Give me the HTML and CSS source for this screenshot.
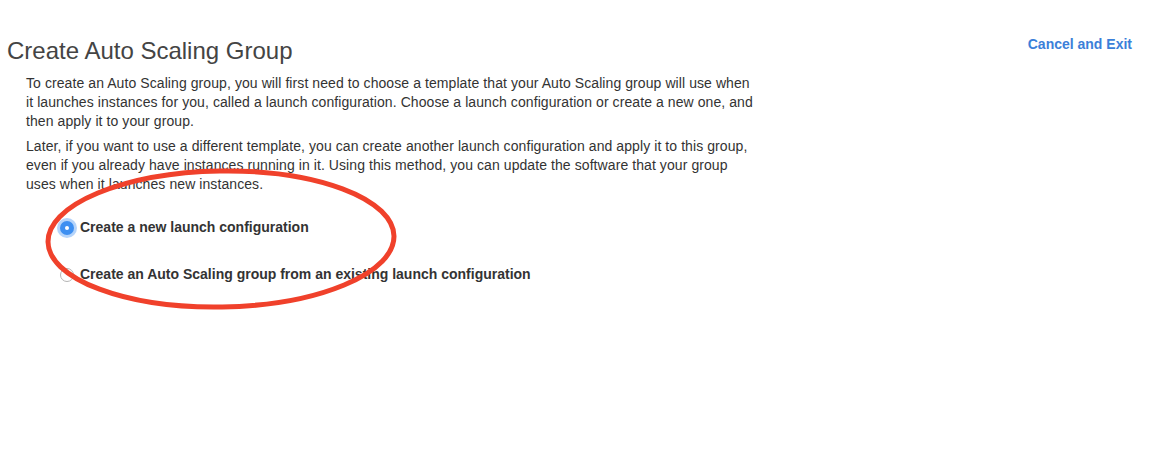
FILE: index.html
```html
<!DOCTYPE html>
<html>
<head>
<meta charset="utf-8">
<link rel="stylesheet" href="styles.css">
</head>
<body>
<div class="page">
  <div class="header">
    <h1 class="title">Create Auto Scaling Group</h1>
    <a class="cancel" href="#">Cancel and Exit</a>
  </div>
  <div class="content">
    <p class="para">To create an Auto Scaling group, you will first need to choose a template that your Auto Scaling group will use when it launches instances for you, called a launch configuration. Choose a launch configuration or create a new one, and then apply it to your group.</p>
    <p class="para">Later, if you want to use a different template, you can create another launch configuration and apply it to this group, even if you already have instances running in it. Using this method, you can update the software that your group uses when it launches new instances.</p>
    <div class="options">
      <label class="option"><span class="radio checked"></span><span class="label">Create a new launch configuration</span></label>
      <label class="option"><span class="radio"></span><span class="label">Create an Auto Scaling group from an existing launch configuration</span></label>
    </div>
  </div>
  <svg class="annotation" width="420" height="170" viewBox="0 0 420 170">
    <ellipse cx="197" cy="72" rx="173" ry="68" fill="none" stroke="#f0412b" stroke-width="5" transform="rotate(-1 197 72)"/>
  </svg>
</div>
</body>
</html>
```
FILE: styles.css
```css
* { box-sizing: border-box; }
html, body { margin: 0; padding: 0; background: #fff; }
body {
  font-family: "Liberation Sans", Arial, Helvetica, sans-serif;
  color: #333;
}
.page {
  position: relative;
  width: 1171px;
  height: 452px;
}
.header {
  display: flex;
  justify-content: space-between;
  align-items: flex-start;
  padding: 36px 39px 0 7px;
}
.title {
  margin: 0;
  font-size: 24px;
  font-weight: normal;
  color: #444;
  line-height: 30px;
}
.cancel {
  font-size: 14px;
  font-weight: bold;
  color: #3b7fd9;
  text-decoration: none;
  line-height: 17px;
  margin-top: 0;
}
.content {
  padding: 8px 0 0 26px;
  width: 758px;
}
.para {
  margin: 0 0 6px 0;
  font-size: 14px;
  line-height: 19px;
  letter-spacing: 0.08px;
  color: #333;
}
.options {
  display: flex;
  flex-direction: column;
  gap: 28px;
  padding: 18px 0 0 34px;
}
.option {
  display: flex;
  align-items: center;
  gap: 6px;
  font-size: 14px;
  font-weight: bold;
  color: #333;
  line-height: 19px;
}
.radio {
  width: 14px;
  height: 14px;
  border-radius: 50%;
  border: 1px solid #b5b5b5;
  background: #fff;
  position: relative;
  flex: none;
}
.radio.checked {
  border: none;
  background: #3d8ff1;
  box-shadow: 0 0 0 3px rgba(90, 160, 245, 0.45);
}
.radio.checked::after {
  content: "";
  position: absolute;
  width: 4px;
  height: 4px;
  border-radius: 50%;
  background: #fff;
  left: 5px;
  top: 5px;
}
.annotation {
  position: absolute;
  left: 24px;
  top: 167px;
}
```
